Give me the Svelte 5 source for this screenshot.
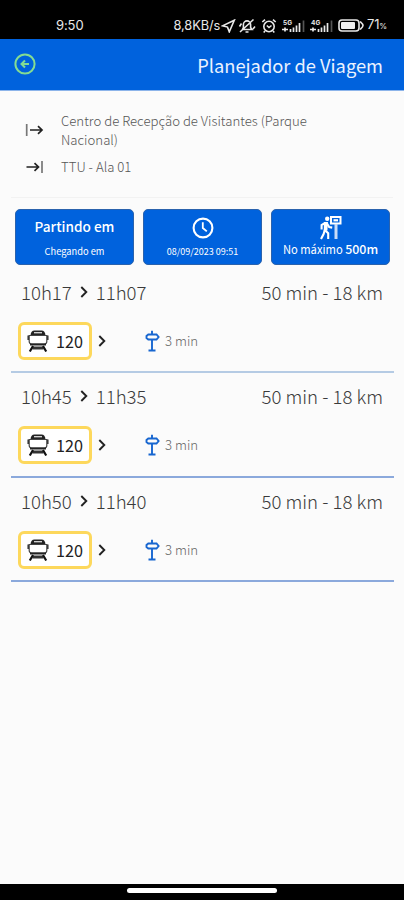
<script>
  const trips = [
    { start: '10h17', end: '11h07', duration: '50 min', distance: '18 km', line: '120', walk: '3 min' },
    { start: '10h45', end: '11h35', duration: '50 min', distance: '18 km', line: '120', walk: '3 min' },
    { start: '10h50', end: '11h40', duration: '50 min', distance: '18 km', line: '120', walk: '3 min' },
  ];

  let departing = $state(true);
</script>

{#snippet chevron()}
  <svg class="chevron" width="8" height="12" viewBox="0 0 8 12">
    <path d="M1.3 1 6.3 6 1.3 11" />
  </svg>
{/snippet}

{#snippet signal(label)}
  <svg class="signal" width="24" height="14" viewBox="0 0 24 14">
    <text x="1" y="5.5">{label}</text>
    <path d="M0 10.5h6M3 8.5v4M8.5 10v3M11.5 8.5V13M14.5 6.5V13M17.5 4V13" />
    <path class="dim" d="M21.5 1.5V13" />
  </svg>
{/snippet}

<div class="screen">
  <div class="status">
    <span class="clock">9:50</span>
    <div class="indicators">
      <span class="speed">8,8KB/s</span>
      <svg width="15" height="14" viewBox="0 0 15 14">
        <path class="line" d="M13.3 1.2 1.5 6.8l5 1.3 1.8 4.7z" />
      </svg>
      <svg class="bell" width="18" height="16" viewBox="0 0 18 16">
        <path class="line" d="M4.5 11.5h9.5l-1.4-2V6.5a3.6 3.6 0 0 0-7.2 0v3zM7.5 14h3M2 14 15.5 1.5M1.5 8.5l2-3M15 11l2-2.5" />
      </svg>
      <svg class="alarm" width="16" height="16" viewBox="0 0 16 16">
        <circle class="line" cx="8" cy="8.5" r="5.2" />
        <path class="line" d="M1.3 4 4 1.6M12 1.6 14.7 4M5.8 7.5 8 9.5l2.5-2M4 13l-1.3 1.5M12 13l1.3 1.5" />
      </svg>
      {@render signal('5G')}
      {@render signal('4G')}
      <svg class="battery" width="26" height="13" viewBox="0 0 26 13">
        <rect class="line" x="1" y="1" width="20" height="11" rx="3" />
        <rect x="3" y="3" width="14" height="7" rx="1" fill="#f0f0f0" />
        <path class="line" d="M22 2.5c1 1 3 2.4 3 4s-2 3-3 4" />
      </svg>
      <span class="level">71<small>%</small></span>
    </div>
  </div>

  <header>
    <button class="back" aria-label="Voltar">
      <svg width="22" height="22" viewBox="0 0 22 22">
        <circle cx="11" cy="11" r="9.6" />
        <path d="M15 11H8M11 7.5 7.5 11l3.5 3.5" />
      </svg>
    </button>
    <h1>Planejador de Viagem</h1>
  </header>

  <section class="places">
    <div class="place from">
      <svg width="19" height="14" viewBox="0 0 19 14">
        <path class="bar" d="M1.7 1v12" />
        <path d="M5 7h12M13 3.2 17 7l-4 3.8" />
      </svg>
      <p>Centro de Recepção de Visitantes (Parque Nacional)</p>
    </div>
    <div class="place to">
      <svg width="19" height="14" viewBox="0 0 19 14">
        <path d="M1.5 7h12M9.5 3.2l4 3.8-4 3.8" />
        <path class="bar" d="M17 1v12" />
      </svg>
      <p>TTU - Ala 01</p>
    </div>
  </section>

  <div class="filters">
    <button class="filter" onclick={() => (departing = !departing)}>
      <span class="mode">{departing ? 'Partindo em' : 'Chegando em'}</span>
      <span class="alt">{departing ? 'Chegando em' : 'Partindo em'}</span>
    </button>
    <button class="filter">
      <svg width="22" height="22" viewBox="0 0 22 22">
        <circle cx="11" cy="11" r="9.4" fill="none" stroke="#fff" stroke-width="2.1" />
        <path d="M10.8 5.2V11l4 3.4" fill="none" stroke="#fff" stroke-width="1.8" />
      </svg>
      <span class="date">08/09/2023 09:51</span>
    </button>
    <button class="filter">
      <svg class="walker" width="23" height="24" viewBox="0 0 23 24">
        <circle cx="8.2" cy="2.8" r="2.2" fill="#fff" />
        <path d="M7 6.5 5.8 14l3.4 3.2V23M5.6 14.5 4.6 18 2 23M6 7 2.6 9v4.5M8 7.5l2.2 3.6 3 .5" fill="none" stroke="#fff" stroke-width="2.1" />
        <path d="m5 6 4 0-.6 8.5H4.8z" fill="#fff" />
        <path d="M12 1h9.5v6.5H12z" fill="none" stroke="#fff" stroke-width="2" />
        <path d="M14.5 4.3H19" fill="none" stroke="#fff" stroke-width="2.2" />
        <path d="M17 8v15" fill="none" stroke="#c9dcf8" stroke-width="3" />
      </svg>
      <span class="limit">No máximo <b>500m</b></span>
    </button>
  </div>

  <ul class="trips">
    {#each trips as trip}
      <li>
        <div class="summary">
          <span class="times">{trip.start}{@render chevron()}{trip.end}</span>
          <span class="total">{trip.duration} - {trip.distance}</span>
        </div>
        <div class="legs">
          <span class="chip">
            <svg width="22" height="22" viewBox="0 0 22 22">
              <path d="M3.5 5.5C3.8 2 5 .5 7.5 .5h7c2.5 0 3.7 1.5 4 5z" fill="#222" />
              <path d="M7 2.7h8" stroke="#ddd" stroke-width="1.3" />
              <path d="M2.2 5.5h17.6v6c0 1.5-1 2.500-2.500 2.500H4.700c-1.500 0-2.500-1-2.500-2.500z" fill="#fff" stroke="#444" stroke-width="1.2" />
              <path d="M1.2 5.500v4.500M20.800 5.500v4.500" stroke="#333" stroke-width="1.500" />
              <path d="M3 13.500h16v2H3z" fill="#222" />
              <path d="M5.500 16.500h11v3h-11z" fill="#333" />
              <path d="M6 16 2.800 21.500M16 16l3.200 5.500" stroke="#111" stroke-width="2.200" />
            </svg>
            <span>{trip.line}</span>
          </span>
          {@render chevron()}
          <span class="walk">
            <svg width="15" height="22" viewBox="0 0 15 22">
              <path d="M7 .8v3.400M7 10v10.500M3.500 20.500h7M3.300 4.500h8.200L13.600 7l-2.100 2.500H3.300L1.500 8V6z" />
            </svg>
            {trip.walk}
          </span>
        </div>
      </li>
    {/each}
  </ul>

  <div class="navbar"><span></span></div>
</div>

<style>
  :global(body) {
    margin: 0;
    background: #fbfbfb;
  }

  .screen {
    display: flex;
    flex-direction: column;
    width: 404px;
    height: 900px;
    background: #fbfbfb;
    color: #444;
    font-family: "Noto Sans CJK SC", "Noto Sans", sans-serif;
    overflow: hidden;
  }

  svg {
    display: block;
    flex: none;
  }

  button {
    border: 0;
    padding: 0;
    font-family: inherit;
    color: #fff;
  }

  .status {
    display: flex;
    justify-content: space-between;
    box-sizing: border-box;
    height: 39px;
    padding: 12px 17px 0 56px;
    background: #000;
    color: #e8e8e8;
    font: 13px/27px Inter, sans-serif;
  }

  .clock {
    letter-spacing: -0.1px;
  }

  .indicators {
    display: flex;
    align-items: center;
  }

  .speed {
    font-size: 12.8px;
    letter-spacing: -0.1px;
    margin-right: 1px;
  }

  .bell {
    margin-left: 2px;
  }

  .alarm {
    margin: 0 5px;
  }

  .line {
    fill: none;
    stroke: #e8e8e8;
    stroke-width: 1.6;
  }

  .signal {
    margin-right: 4px;
  }

  .signal text {
    fill: #e8e8e8;
    font: bold 6.5px Inter, sans-serif;
  }

  .signal path {
    stroke: #e8e8e8;
    stroke-width: 1.7;
  }

  .signal .dim {
    stroke: #555;
  }

  .level {
    font-size: 13px;
    letter-spacing: -0.2px;
    margin-left: 3px;
  }

  .level small {
    font-size: 8px;
  }

  header {
    display: flex;
    align-items: center;
    justify-content: space-between;
    box-sizing: border-box;
    height: 52px;
    padding: 0 21px 0 14px;
    background: #0062dd;
    border-bottom: 1px solid #8cb4ea;
  }

  .back {
    margin-bottom: 2px;
    background: none;
  }

  .back svg {
    fill: none;
    stroke: #84dc92;
    stroke-width: 2;
  }

  h1 {
    margin: 1px 0 0;
    color: #eaf2ff;
    font-size: 18.3px;
    font-weight: 400;
    line-height: 28px;
  }

  .places {
    box-sizing: border-box;
    height: 107px;
    margin: 0 11px;
    padding: 20px 0 0 14px;
    border-bottom: 1px solid #f2f2f2;
  }

  .place {
    display: flex;
    align-items: center;
    gap: 17px;
  }

  .place svg {
    fill: none;
    stroke: #222;
    stroke-width: 1.7;
  }

  .place .bar {
    stroke: #777;
  }

  .place p {
    width: 270px;
    margin: 0;
    color: #555;
    font-size: 13.2px;
    font-weight: 300;
    line-height: 19px;
  }

  .to {
    margin-top: 8px;
  }

  .filters {
    display: grid;
    grid-template-columns: repeat(3, 1fr);
    gap: 9px;
    margin: 11px 14px 0 15px;
  }

  .filter {
    display: flex;
    flex-direction: column;
    align-items: center;
    justify-content: flex-start;
    box-sizing: border-box;
    height: 56px;
    padding-top: 7px;
    background: #0062dd;
    border: 1px solid #2a62ad;
    border-radius: 5px;
    line-height: 16px;
    white-space: nowrap;
  }

  .mode {
    font-size: 13.6px;
    font-weight: 500;
    line-height: 18px;
  }

  .alt {
    margin-top: 8px;
    font-size: 9.3px;
  }

  .date {
    margin-top: 5px;
    font-size: 9px;
  }

  .walker {
    margin-top: -1px;
  }

  .limit {
    margin-top: 1px;
    font-size: 11.2px;
  }

  .limit b {
    font-size: 12.4px;
    font-weight: 500;
  }

  .trips {
    flex: 1;
    margin: 4px 10px 0 11px;
    padding: 0;
    list-style: none;
  }

  .trips li {
    box-sizing: border-box;
    height: 104.3px;
    padding: 10px 11px 0 7px;
    border-bottom: 2px solid #8ba9dc;
  }

  .trips li:first-child {
    border-color: #b5cbe4;
  }

  .summary {
    display: flex;
    justify-content: space-between;
    padding-left: 3px;
    color: #3a3a3a;
    font-size: 18.6px;
    font-weight: 300;
    line-height: 26px;
  }

  .times {
    display: flex;
    align-items: center;
    gap: 8px;
  }

  .chevron {
    fill: none;
    stroke: #222;
    stroke-width: 1.9;
  }

  .legs {
    display: flex;
    align-items: center;
    margin-top: 17px;
  }

  .chip {
    display: flex;
    align-items: center;
    gap: 7px;
    box-sizing: border-box;
    width: 74px;
    height: 38px;
    margin-right: 6px;
    padding-left: 6px;
    background: #fff;
    border: 3px solid #fdd85c;
    border-radius: 6px;
    color: #222;
    font-size: 16.2px;
    line-height: 24px;
  }

  .walk {
    display: flex;
    align-items: center;
    gap: 5px;
    margin-left: 39px;
    color: #666;
    font-size: 13.2px;
    font-weight: 300;
    line-height: 20px;
  }

  .walk svg {
    fill: none;
    stroke: #1766d0;
    stroke-width: 1.9;
  }

  .navbar {
    display: flex;
    justify-content: center;
    height: 16px;
    background: #000;
  }

  .navbar span {
    width: 150px;
    height: 5px;
    margin-top: 4px;
    background: #fff;
    border-radius: 3px;
  }
</style>
